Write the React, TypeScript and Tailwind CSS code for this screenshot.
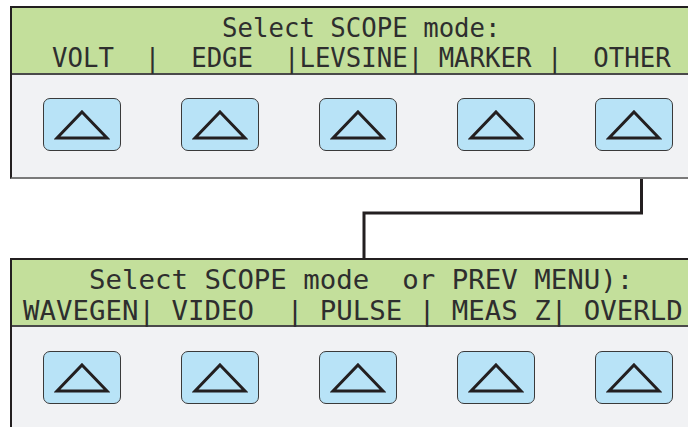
import React from 'react';

const lcdFont = { fontFamily: '"DejaVu Sans Mono", "Liberation Mono", monospace' };

const TriangleKey: React.FC = () => (
  <div className="flex h-[53px] w-[78px] shrink-0 items-center justify-center rounded-[7px] border-[1.5px] border-[#3a3a3a] bg-[#b8e3f7]">
    <svg width="56" height="32" viewBox="0 0 56 32">
      <polygon points="28,3 53,29 3,29" fill="none" stroke="#231f20" strokeWidth="3" strokeLinejoin="miter" />
    </svg>
  </div>
);

const KeyRow: React.FC<{ top: string }> = ({ top }) => (
  <div className={`flex gap-[60px] pl-[31px] ${top}`}>
    <TriangleKey />
    <TriangleKey />
    <TriangleKey />
    <TriangleKey />
    <TriangleKey />
  </div>
);

const App: React.FC = () => {
  return (
    <div className="relative h-[427px] w-[688px] overflow-hidden bg-white">
      <div className="pt-[6px] pl-[10px]">
        {/* first menu */}
        <div className="w-[700px] border-t-2 border-l-2 border-b-2 border-t-[#231f20] border-l-[#231f20] border-b-[#7a7a7a]">
          <div
            className="h-[67px] border-b-2 border-[#4a4a4a] bg-[#c3df9b] pl-[40px] pt-[5px] text-[25.7px] leading-[30px] whitespace-pre text-[#2e2e2e]"
            style={lcdFont}
          >
            <div>{'           Select SCOPE mode:'}</div>
            <div>{'VOLT  |  EDGE  |LEVSINE| MARKER |  OTHER'}</div>
          </div>
          <div className="h-[102px] bg-[#f1f2f4]">
            <KeyRow top="pt-[23px]" />
          </div>
        </div>

        {/* connector */}
        <svg width="688" height="79" className="-ml-[10px] block">
          <polyline points="641.5,0 641.5,34 364,34 364,79" fill="none" stroke="#231f20" strokeWidth="3" />
        </svg>

        {/* second menu */}
        <div className="w-[700px] border-t-2 border-l-2 border-[#231f20]">
          <div
            className="h-[67px] border-b-2 border-[#4a4a4a] bg-[#c3df9b] pl-[11px] pt-[4px] text-[27.4px] leading-[31px] whitespace-pre text-[#2e2e2e]"
            style={lcdFont}
          >
            <div>{'    Select SCOPE mode  or PREV MENU):'}</div>
            <div>{'WAVEGEN| VIDEO  | PULSE | MEAS Z| OVERLD'}</div>
          </div>
          <div className="h-[120px] bg-[#f1f2f4]">
            <KeyRow top="pt-[24px]" />
          </div>
        </div>
      </div>
    </div>
  );
};

export default App;
